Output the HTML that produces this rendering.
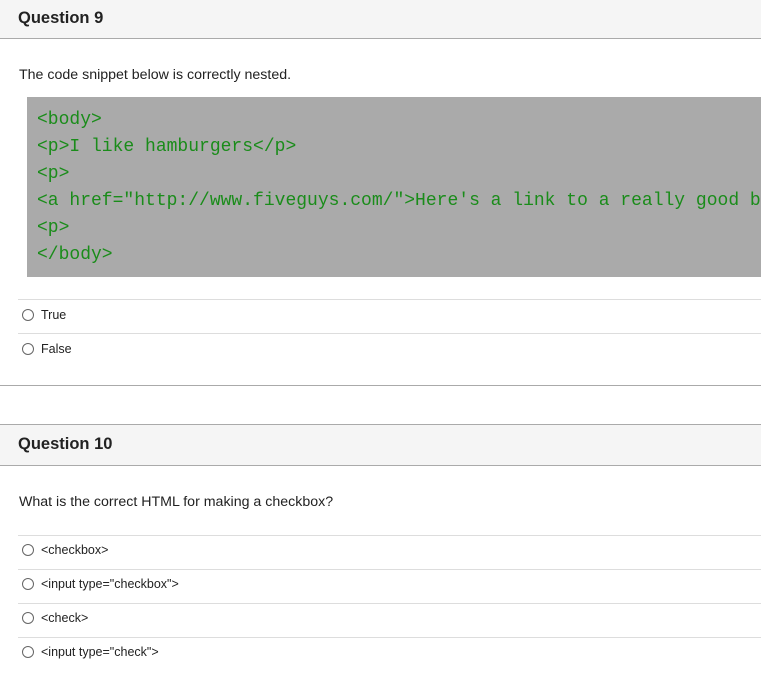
<!DOCTYPE html>
<html><head><style>
body{margin:0;background:#fff;font-family:"Liberation Sans",sans-serif;color:#2d3b45;width:761px;height:685px;overflow:hidden;position:relative}
.hd{position:absolute;left:0;width:761px;background:#f5f5f5;border-bottom:1px solid #aaa}
.hd span{position:absolute;left:18px;font-size:16.5px;font-weight:bold;color:#222}
.t{position:absolute;left:19px;font-size:14.2px;color:#222}
.code{position:absolute;left:27px;top:97px;width:734px;height:180px;background:#aaa;overflow:hidden}
.code div{position:absolute;left:10px;font-family:"Liberation Mono",monospace;font-size:18px;color:#1a8c1a;white-space:pre;line-height:20px}
.ln{position:absolute;left:18px;width:743px;height:1px;background:#ddd}
.a{position:absolute;left:22px;font-size:12.5px;color:#222;line-height:14px}
.a i{display:inline-block;width:10px;height:10px;border:1px solid #666;border-radius:50%;vertical-align:-2px;margin-right:7px}
</style></head><body>
<div class="hd" style="top:0;height:38px"><span style="top:9px">Question 9</span></div>
<div class="t" style="top:67px">The code snippet below is correctly nested.</div>
<div class="code">
<div style="top:13px">&lt;body&gt;</div>
<div style="top:40px">&lt;p&gt;I like hamburgers&lt;/p&gt;</div>
<div style="top:67px">&lt;p&gt;</div>
<div style="top:94px">&lt;a href="http://www.fiveguys.com/"&gt;Here's a link to a really good b</div>
<div style="top:121px">&lt;p&gt;</div>
<div style="top:148px">&lt;/body&gt;</div>
</div>
<div class="ln" style="top:299px"></div>
<div class="a" style="top:308px"><i></i>True</div>
<div class="ln" style="top:333px"></div>
<div class="a" style="top:342px"><i></i>False</div>
<div style="position:absolute;left:0;top:385px;width:761px;height:1px;background:#aaa"></div>
<div class="hd" style="top:424px;height:40px;border-top:1px solid #aaa"><span style="top:10px">Question 10</span></div>
<div class="t" style="top:494px">What is the correct HTML for making a checkbox?</div>
<div class="ln" style="top:535px"></div>
<div class="a" style="top:543px"><i></i>&lt;checkbox&gt;</div>
<div class="ln" style="top:569px"></div>
<div class="a" style="top:577px"><i></i>&lt;input type="checkbox"&gt;</div>
<div class="ln" style="top:603px"></div>
<div class="a" style="top:611px"><i></i>&lt;check&gt;</div>
<div class="ln" style="top:637px"></div>
<div class="a" style="top:645px"><i></i>&lt;input type="check"&gt;</div>
</body></html>
